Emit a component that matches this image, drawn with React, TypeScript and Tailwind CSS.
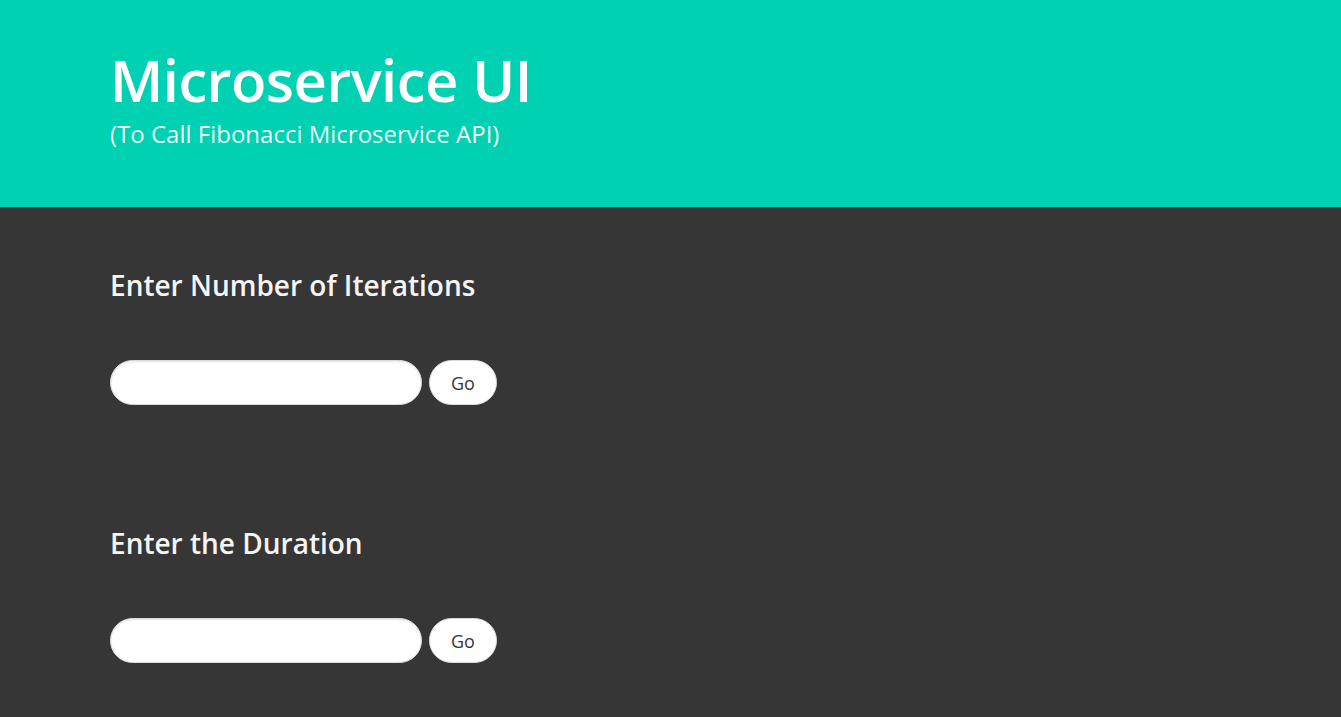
export default function App() {
  const sections = ['Enter Number of Iterations', 'Enter the Duration']

  return (
    <div className="min-h-[717px] bg-[#363636] font-['Open_Sans',sans-serif]">
      <section className="h-[207px] bg-[#00d1b2] px-[110px] pt-[45px]">
        <h1 className="text-[58px] font-semibold leading-[70px] tracking-[-0.6px] text-white">Microservice UI</h1>
        <p className="mt-[5px] text-[24px] leading-[28px] text-white/95">(To Call Fibonacci Microservice API)</p>
      </section>

      <main className="px-[110px] pt-[61px]">
        {sections.map((label) => (
          <div key={label} className="mb-[121px] flex flex-col">
            <h3 className="text-[28px] font-semibold leading-[34px] text-[#f5f5f5]">{label}</h3>
            <div className="mt-[58px] flex gap-[7px]">
              <input
                type="text"
                className="h-[45px] w-[312px] rounded-full border border-[#dbdbdb] bg-white px-4 text-lg shadow-[inset_0_1px_2px_rgba(10,10,10,0.1)] outline-none"
              />
              <button className="h-[45px] w-[68px] rounded-full border border-[#dbdbdb] bg-white pt-[2px] text-[18px] text-[#363636]">
                Go
              </button>
            </div>
          </div>
        ))}
      </main>
    </div>
  )
}
